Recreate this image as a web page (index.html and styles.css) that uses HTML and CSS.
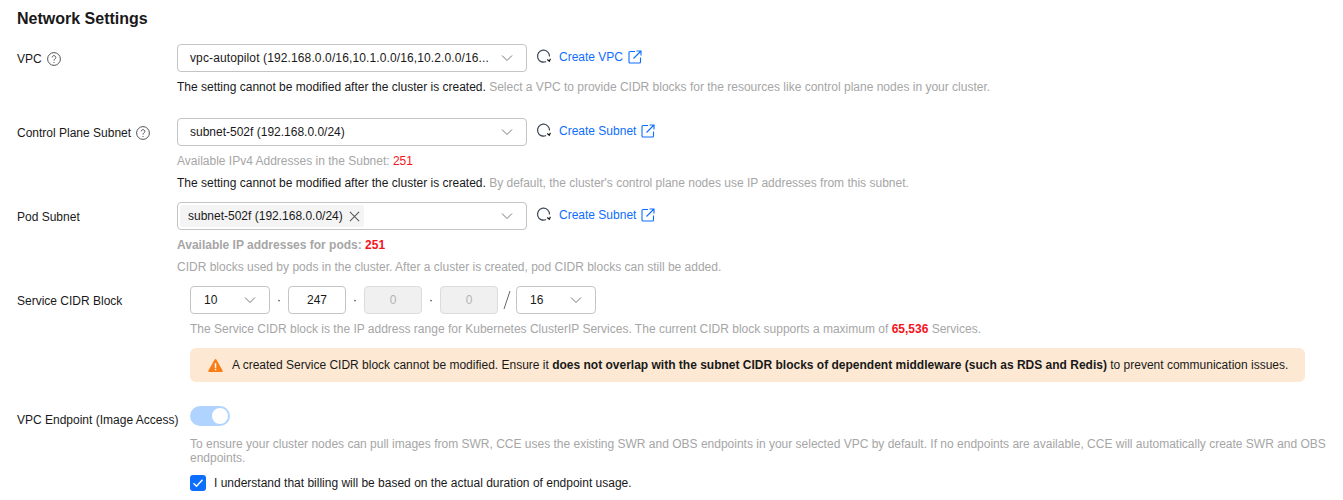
FILE: index.html
```html
<!DOCTYPE html>
<html lang="en">
<head>
    <meta charset="UTF-8">
    <meta name="viewport" content="width=device-width, initial-scale=1.0">
    <title>Network Settings</title>
    <link rel="stylesheet" href="styles.css">
</head>
<body>
    <h2 class="section-title">Network Settings</h2>

    <div class="form-row row-vpc">
        <div class="form-label">VPC
            <svg class="help-icon" viewBox="0 0 14 14"><circle cx="7" cy="7" r="6.4"/><path d="M5.2 5.4a1.8 1.8 0 1 1 2.7 1.6c-.6.3-.9.7-.9 1.3v.3"/><path d="M7 10v1"/></svg>
        </div>
        <div class="form-body">
            <div class="select-line">
                <div class="select-box">
                    <span class="select-value long">vpc-autopilot (192.168.0.0/16,10.1.0.0/16,10.2.0.0/16...</span>
                    <svg class="chevron" viewBox="0 0 12 8"><path d="M1 1.5l5 5 5-5"/></svg>
                </div>
                <svg class="refresh-icon" viewBox="0 0 16 16"><path d="M10.8 13.4A6.4 6.4 0 1 1 14.4 8"/><path class="dark" d="M12 11.2l2.2 1.9 1.2-2.6"/></svg>
                <a class="create-link" href="#">Create VPC
                    <svg class="ext-icon" viewBox="0 0 14 14"><path d="M7 1.5H2a1 1 0 0 0-1 1V12a1 1 0 0 0 1 1h9.500a1 1 0 0 0 1-1V7.500"/><path d="M5.500 8.500L12.500 1.500M8.500 1h4.500v4.500"/></svg>
                </a>
            </div>
            <p class="help-line first"><span class="dark-text">The setting cannot be modified after the cluster is created.</span> Select a VPC to provide CIDR blocks for the resources like control plane nodes in your cluster.</p>
        </div>
    </div>

    <div class="form-row row-control">
        <div class="form-label">Control Plane Subnet
            <svg class="help-icon" viewBox="0 0 14 14"><circle cx="7" cy="7" r="6.4"/><path d="M5.2 5.4a1.8 1.8 0 1 1 2.7 1.6c-.6.3-.9.7-.9 1.3v.3"/><path d="M7 10v1"/></svg>
        </div>
        <div class="form-body">
            <div class="select-line">
                <div class="select-box">
                    <span class="select-value">subnet-502f (192.168.0.0/24)</span>
                    <svg class="chevron" viewBox="0 0 12 8"><path d="M1 1.5l5 5 5-5"/></svg>
                </div>
                <svg class="refresh-icon" viewBox="0 0 16 16"><path d="M10.8 13.4A6.4 6.4 0 1 1 14.4 8"/><path class="dark" d="M12 11.2l2.2 1.9 1.2-2.6"/></svg>
                <a class="create-link" href="#">Create Subnet
                    <svg class="ext-icon" viewBox="0 0 14 14"><path d="M7 1.5H2a1 1 0 0 0-1 1V12a1 1 0 0 0 1 1h9.500a1 1 0 0 0 1-1V7.500"/><path d="M5.500 8.500L12.500 1.500M8.500 1h4.500v4.500"/></svg>
                </a>
            </div>
            <p class="help-line first">Available IPv4 Addresses in the Subnet: <span class="red">251</span></p>
            <p class="help-line next"><span class="dark-text">The setting cannot be modified after the cluster is created.</span> By default, the cluster's control plane nodes use IP addresses from this subnet.</p>
        </div>
    </div>

    <div class="form-row row-pod">
        <div class="form-label">Pod Subnet</div>
        <div class="form-body">
            <div class="select-line">
                <div class="select-box has-tag">
                    <span class="tag">subnet-502f (192.168.0.0/24)
                        <svg class="tag-close" viewBox="0 0 12 12"><path d="M1 1l10 10M11 1L1 11"/></svg>
                    </span>
                    <svg class="chevron" viewBox="0 0 12 8"><path d="M1 1.5l5 5 5-5"/></svg>
                </div>
                <svg class="refresh-icon" viewBox="0 0 16 16"><path d="M10.8 13.4A6.4 6.4 0 1 1 14.4 8"/><path class="dark" d="M12 11.2l2.2 1.9 1.2-2.6"/></svg>
                <a class="create-link" href="#">Create Subnet
                    <svg class="ext-icon" viewBox="0 0 14 14"><path d="M7 1.5H2a1 1 0 0 0-1 1V12a1 1 0 0 0 1 1h9.500a1 1 0 0 0 1-1V7.500"/><path d="M5.500 8.500L12.500 1.500M8.500 1h4.500v4.500"/></svg>
                </a>
            </div>
            <p class="help-line first"><b>Available IP addresses for pods: <span class="red">251</span></b></p>
            <p class="help-line next">CIDR blocks used by pods in the cluster. After a cluster is created, pod CIDR blocks can still be added.</p>
        </div>
    </div>

    <div class="form-row row-service">
        <div class="form-label">Service CIDR Block</div>
        <div class="form-body indented">
            <div class="cidr-line">
                <div class="cidr-box cidr-select">10 <svg class="chevron" viewBox="0 0 12 8"><path d="M1 1.500l5 5 5-5"/></svg></div>
                <span class="cidr-dot">·</span>
                <div class="cidr-box cidr-input">247</div>
                <span class="cidr-dot">·</span>
                <div class="cidr-box cidr-input disabled">0</div>
                <span class="cidr-dot">·</span>
                <div class="cidr-box cidr-input disabled">0</div>
                <svg class="cidr-slash" viewBox="0 0 8 20"><path d="M7 1L1 19"/></svg>
                <div class="cidr-box cidr-select">16 <svg class="chevron" viewBox="0 0 12 8"><path d="M1 1.500l5 5 5-5"/></svg></div>
            </div>
            <p class="help-line first">The Service CIDR block is the IP address range for Kubernetes ClusterIP Services. The current CIDR block supports a maximum of <b class="red">65,536</b> Services.</p>
            <div class="alert">
                <svg class="alert-icon" viewBox="0 0 16 15"><path d="M8 .5a1 1 0 0 1 .9.5l6.800 12a1 1 0 0 1-.9 1.500H1.200a1 1 0 0 1-.9-1.500L7.100 1a1 1 0 0 1 .9-.5z"/><rect x="7.200" y="5" width="1.600" height="5" fill="#fff"/><rect x="7.200" y="11" width="1.600" height="1.600" fill="#fff"/></svg>
                <span>A created Service CIDR block cannot be modified. Ensure it <b>does not overlap with the subnet CIDR blocks of dependent middleware (such as RDS and Redis)</b> to prevent communication issues.</span>
            </div>
        </div>
    </div>

    <div class="form-row row-endpoint">
        <div class="form-label">VPC Endpoint (Image Access)</div>
        <div class="form-body indented">
            <div class="toggle"><span class="toggle-knob"></span></div>
            <p class="endpoint-text">To ensure your cluster nodes can pull images from SWR, CCE uses the existing SWR and OBS endpoints in your selected VPC by default. If no endpoints are available, CCE will automatically create SWR and OBS endpoints.</p>
            <div class="check-line">
                <span class="checkbox"><svg viewBox="0 0 16 16"><path d="M3.500 8.200l3 3 6-6.500"/></svg></span>
                <span>I understand that billing will be based on the actual duration of endpoint usage.</span>
            </div>
        </div>
    </div>
</body>
</html>
```

FILE: styles.css
```css
body {
    margin: 0;
    height: 500px;
    overflow: hidden;
    padding: 0 10px 0 17px;
    background-color: #fff;
    font-family: "Liberation Sans", Arial, sans-serif;
    font-size: 12px;
    color: #191919;
}

.section-title {
    margin: 0;
    padding-top: 10px;
    height: 44px;
    box-sizing: border-box;
    font-size: 16px;
    line-height: 18px;
    font-weight: bold;
}

.form-row {
    display: flex;
}

.form-label {
    flex: 0 0 160px;
    min-width: 0;
    height: 28px;
    display: flex;
    align-items: center;
    gap: 5px;
    padding-top: 1px;
    box-sizing: border-box;
    white-space: nowrap;
}

.form-body {
    flex: 1;
    min-width: 0;
}

.form-body.indented {
    padding-left: 13px;
}

.row-control { margin-top: 21px; }
.row-pod { margin-top: 9px; }
.row-service { margin-top: 9px; }
.row-endpoint { margin-top: 24px; }

.row-endpoint .form-label {
    height: 27px;
}

.help-icon {
    width: 14px;
    height: 14px;
    fill: none;
    stroke: #555;
    stroke-width: 1;
}

.select-line {
    display: flex;
    align-items: center;
    height: 28px;
}

.select-box {
    width: 350px;
    height: 28px;
    box-sizing: border-box;
    border: 1px solid #c4c4c4;
    border-radius: 4px;
    padding: 0 13px 0 12px;
    display: flex;
    align-items: center;
    justify-content: space-between;
}

.select-box.has-tag {
    padding-left: 2px;
}

.select-value.long {
    letter-spacing: .12px;
}

.chevron {
    width: 12px;
    height: 8px;
    fill: none;
    stroke: #777;
    stroke-width: 1;
}

.refresh-icon {
    width: 15px;
    height: 15px;
    margin: -3px 8px 0 9px;
    fill: none;
    stroke: #3c4657;
    stroke-width: 1.25;
    flex: none;
}

.refresh-icon .dark {
    stroke: #191919;
}

.create-link {
    display: flex;
    align-items: center;
    gap: 5px;
    margin-top: -2px;
    color: #0d6efd;
    text-decoration: none;
}

.ext-icon {
    width: 14px;
    height: 14px;
    fill: none;
    stroke: #0d6efd;
    stroke-width: 1.1;
}

.tag {
    display: flex;
    align-items: center;
    gap: 6px;
    height: 22px;
    padding: 0 4px 0 8px;
    background-color: #f4f4f4;
    border-radius: 3px;
}

.tag-close {
    width: 11px;
    height: 11px;
    fill: none;
    stroke: #555;
    stroke-width: 1.1;
}

.help-line {
    margin: 0;
    line-height: 20px;
    color: #a6a6a6;
    white-space: nowrap;
}

.help-line.first { margin-top: 5px; }
.help-line.next { margin-top: 2px; }

.dark-text { color: #191919; }
.red { color: #f5141e; }

.cidr-line {
    display: flex;
    align-items: center;
    height: 28px;
}

.cidr-box {
    height: 28px;
    box-sizing: border-box;
    border: 1px solid #c4c4c4;
    border-radius: 4px;
}

.cidr-select {
    width: 80px;
    padding: 0 13px;
    display: flex;
    align-items: center;
    justify-content: space-between;
}

.cidr-input {
    width: 58px;
    display: flex;
    align-items: center;
    justify-content: center;
}

.cidr-input.disabled {
    background-color: #f0f0f0;
    border-color: #dcdcdc;
    color: #b3b3b3;
}

.cidr-dot {
    width: 18px;
    text-align: center;
    color: #191919;
}

.cidr-slash {
    width: 8px;
    height: 20px;
    margin: 0 5px;
    fill: none;
    stroke: #666;
}

.alert {
    margin-top: 9px;
    width: 1115px;
    height: 34px;
    box-sizing: border-box;
    padding: 0 18px;
    display: flex;
    align-items: center;
    gap: 9px;
    background-color: #fde9d3;
    border-radius: 6px;
    white-space: nowrap;
}

.alert-icon {
    width: 15px;
    height: 15px;
    fill: #fa7d14;
    flex: none;
}

.toggle {
    width: 40px;
    height: 20px;
    background-color: #b0d3ff;
    border-radius: 10px;
    display: flex;
    justify-content: flex-end;
    align-items: center;
    padding-right: 2px;
    box-sizing: border-box;
}

.toggle-knob {
    width: 16px;
    height: 16px;
    background-color: #fff;
    border-radius: 50%;
}

.endpoint-text {
    margin: 11px 0 0;
    line-height: 14px;
    color: #a6a6a6;
}

.check-line {
    display: flex;
    align-items: center;
    gap: 8px;
    margin-top: 10px;
    height: 16px;
}

.checkbox {
    width: 16px;
    height: 16px;
    background-color: #0d6efd;
    border-radius: 3px;
    display: block;
}

.checkbox svg {
    display: block;
    fill: none;
    stroke: #fff;
    stroke-width: 1.4;
}
```
